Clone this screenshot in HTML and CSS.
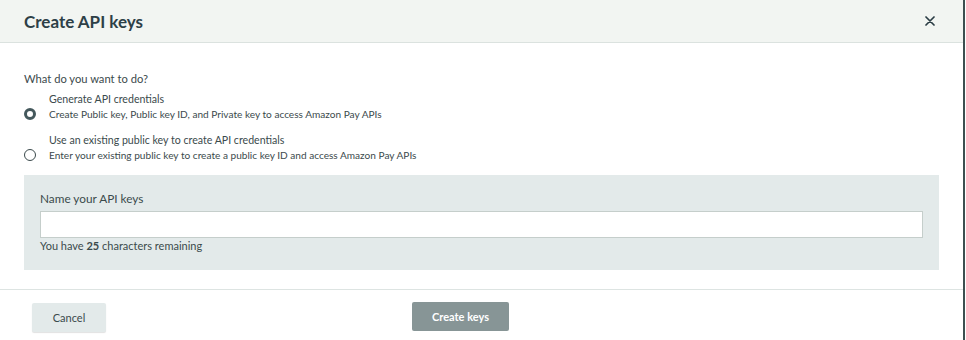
FILE: index.html
```html
<!DOCTYPE html>
<html lang="en">
<head>
  <meta charset="UTF-8">
  <meta name="viewport" content="width=device-width, initial-scale=1.0">
  <title>Create API keys</title>
  <link rel="stylesheet" href="styles.css">
</head>
<body>
  <div class="modal">
    <div class="modal-header">
      <h1>Create API keys</h1>
      <button class="close-btn" aria-label="Close">
        <svg width="10" height="10" viewBox="0 0 10 10"><path d="M1 1 L9 9 M9 1 L1 9" stroke="#2b3d45" stroke-width="1.7" stroke-linecap="round"/></svg>
      </button>
    </div>

    <div class="modal-body">
      <p class="question">What do you want to do?</p>

      <label class="option">
        <span class="radio checked"></span>
        <span class="option-text">
          <span class="option-title">Generate API credentials</span>
          <span class="option-desc">Create Public key, Public key ID, and Private key to access Amazon Pay APIs</span>
        </span>
      </label>

      <label class="option">
        <span class="radio"></span>
        <span class="option-text">
          <span class="option-title">Use an existing public key to create API credentials</span>
          <span class="option-desc">Enter your existing public key to create a public key ID and access Amazon Pay APIs</span>
        </span>
      </label>

      <div class="panel">
        <label class="field-label" for="key-name">Name your API keys</label>
        <input type="text" id="key-name" class="field-input">
        <div class="hint">You have <b>25</b> characters remaining</div>
      </div>
    </div>

    <div class="modal-footer">
      <button class="btn btn-cancel">Cancel</button>
      <button class="btn btn-create">Create keys</button>
    </div>
  </div>
</body>
</html>
```

FILE: styles.css
```css
body {
  margin: 0;
  font-family: Lato, "Open Sans", Arial, sans-serif;
  background-color: #fff;
  color: #3b4a4c;
}
.modal {
  width: 965px;
  height: 340px;
  box-sizing: border-box;
  border-right: 2px solid #3d4f50;
  background-color: #fff;
}
.modal-header {
  height: 43px;
  box-sizing: border-box;
  display: flex;
  align-items: center;
  justify-content: space-between;
  padding: 0 27px 0 24px;
  background-color: #f2f5f2;
  border-bottom: 1px solid #dbe2df;
}
.modal-header h1 {
  margin: 0;
  font-size: 17px;
  font-weight: 700;
  color: #2d4047;
}
.close-btn {
  border: none;
  background: none;
  padding: 0;
  width: 12px;
  height: 12px;
  display: flex;
  align-items: center;
  justify-content: center;
  cursor: pointer;
}
.modal-body {
  padding: 27px 24px 0 24px;
}
.question {
  margin: 0 0 3px 0;
  font-size: 11.2px;
  line-height: 18px;
}
.option {
  display: flex;
  align-items: flex-end;
  gap: 13px;
  margin-bottom: 10px;
}
.option-text {
  display: flex;
  flex-direction: column;
}
.option-title {
  font-size: 10.6px;
  line-height: 16px;
}
.option-desc {
  font-size: 10.1px;
  line-height: 15px;
}
.radio {
  width: 12px;
  height: 12px;
  box-sizing: border-box;
  border-radius: 50%;
  border: 1px solid #3b4a4c;
  margin-bottom: 2px;
  flex-shrink: 0;
}
.radio.checked {
  border: 3.5px solid #44585c;
  background-color: #fff;
}
.panel {
  margin-top: 12px;
  background-color: #e3eaea;
  padding: 17px 16px 17px 16px;
  height: 95px;
  box-sizing: border-box;
}
.field-label {
  display: block;
  font-size: 11.8px;
  line-height: 14px;
  margin-bottom: 5px;
}
.field-input {
  display: block;
  width: 100%;
  height: 27px;
  box-sizing: border-box;
  border: 1px solid #c5cecb;
  background-color: #fff;
  margin: 0;
}
.hint {
  font-size: 11px;
  line-height: 16px;
}
.hint b {
  font-weight: 700;
}
.modal-footer {
  margin-top: 19px;
  border-top: 1px solid #dde4e2;
  padding: 13px 0 0 32px;
  display: flex;
  align-items: flex-start;
}
.btn {
  height: 29px;
  border: none;
  border-radius: 2px;
  font-family: inherit;
  font-size: 11px;
  cursor: pointer;
}
.btn-cancel {
  width: 74px;
  background-color: #e3eaea;
  color: #3b4a4c;
  box-shadow: 0 1px 1px rgba(0, 0, 0, 0.12);
}
.btn-create {
  width: 97px;
  margin-left: 306px;
  margin-top: -1px;
  background-color: #879596;
  color: #fff;
  font-weight: 700;
}
```
